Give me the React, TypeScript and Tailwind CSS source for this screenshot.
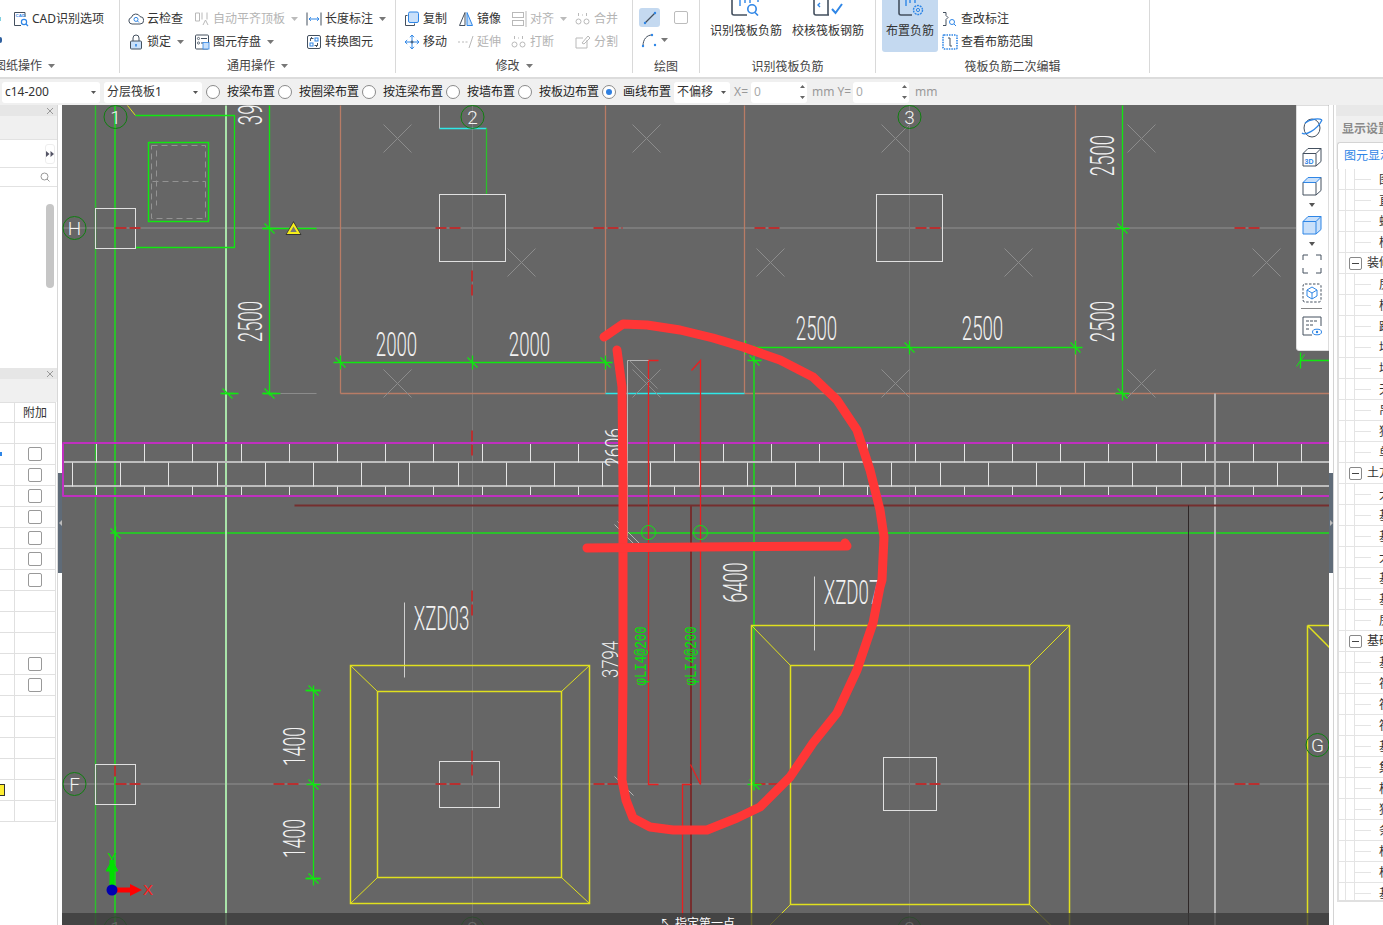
import React from "react";

const DK = "#44505f";
const BL = "#2f86e6";
const LB = "#c9e0fa";
const GY = "#b9b9b9";

function Ic({ w = 16, h = 16, children }: { w?: number; h?: number; children: React.ReactNode }) {
  return (
    <svg width={w} height={h} viewBox={`0 0 ${w} ${h}`} fill="none" className="shrink-0">
      {children}
    </svg>
  );
}

function Caret({ c = "#777" }: { c?: string }) {
  return (
    <svg width="7" height="4" viewBox="0 0 7 4" className="shrink-0">
      <path d="M0 0h7L3.5 4z" fill={c} />
    </svg>
  );
}

const icons: Record<string, React.ReactNode> = {
  cad: (
    <Ic>
      <path d="M12 6V1.5H1.5v13H8" stroke={DK} />
      <text x="2.6" y="6" fontSize="4.4" fontWeight="700" fill={BL} fontFamily="Liberation Sans">CAD</text>
      <circle cx="11" cy="11" r="2.6" stroke={BL} strokeWidth="1.2" />
      <path d="M13 13l2 2" stroke={BL} strokeWidth="1.2" />
    </Ic>
  ),
  cloud: (
    <Ic>
      <path d="M4 13a3.3 3.3 0 0 1-.6-6.5A4.6 4.6 0 0 1 12 5.6a3.7 3.7 0 0 1 0 7.4z" stroke={DK} />
      <circle cx="8" cy="8.4" r="2" stroke={BL} />
      <path d="M9.5 10l1.5 1.5" stroke={BL} />
    </Ic>
  ),
  lock: (
    <Ic>
      <path d="M5 7V4a3 3 0 0 1 6 0v3" stroke={DK} />
      <rect x="2.5" y="7" width="11" height="8" rx="1" fill={LB} stroke={DK} />
      <path d="M8 10v2.5" stroke={BL} strokeWidth="1.6" />
    </Ic>
  ),
  auto: (
    <Ic>
      <path d="M1.5 2v8h4V2zM8 1.5v7M13 1.5v7M9 14l2.5-5 2.5 5" stroke={GY} />
    </Ic>
  ),
  store: (
    <Ic>
      <rect x="1.5" y="1" width="13" height="14" rx="1" stroke={DK} />
      <circle cx="4.5" cy="4.5" r="1.1" stroke={DK} strokeWidth=".8" />
      <circle cx="4.5" cy="9" r="1.1" stroke={DK} strokeWidth=".8" />
      <path d="M7 4.5h6M7 9h2" stroke={DK} />
      <rect x="9" y="8.5" width="6" height="6.5" fill={LB} stroke={BL} strokeWidth=".8" />
    </Ic>
  ),
  dim: (
    <Ic>
      <path d="M1 1.5v13M15 1.5v13" stroke={DK} />
      <path d="M3 8h10M3 8l2-1.8M3 8l2 1.8M13 8l-2-1.8M13 8l-2 1.8" stroke={BL} />
    </Ic>
  ),
  conv: (
    <Ic>
      <rect x="1.5" y="1.5" width="13" height="13" rx="1.5" stroke={DK} />
      <path d="M4.5 7V4.5h3M4.5 4.5L6 3M11.5 9v2.5h-3M11.5 11.5L10 13" stroke={DK} />
      <rect x="9" y="4" width="3" height="3" stroke={BL} />
      <rect x="4" y="9" width="3" height="3" stroke={BL} />
    </Ic>
  ),
  copy: (
    <Ic>
      <path d="M3.5 4.5h-2v10h9v-2" stroke={DK} />
      <rect x="4.5" y="1" width="10" height="10.5" rx="1.5" fill={LB} stroke={BL} />
    </Ic>
  ),
  move: (
    <Ic>
      <path d="M8 2v12M2 8h12M8 1L6 3.2M8 1l2 2.2M8 15l-2-2.2M8 15l2-2.2M1 8l2.2-2M1 8l2.2 2M15 8l-2.2-2M15 8l-2.2 2" stroke={BL} />
      <path d="M6.5 8h3M8 6.5v3" stroke={DK} />
    </Ic>
  ),
  mirror: (
    <Ic>
      <path d="M7 1.5v13H1.5z" stroke={DK} fill="#fff" />
      <path d="M9 1.5v13h5.5z" stroke={BL} fill={LB} />
    </Ic>
  ),
  extend: (
    <Ic>
      <path d="M0 8h2M4 8h2M7.5 8h2" stroke={GY} />
      <path d="M15 2L11 14" stroke={GY} />
    </Ic>
  ),
  align: (
    <Ic>
      <rect x="1.5" y="1.5" width="11" height="5" stroke={GY} />
      <rect x="1.5" y="9.5" width="11" height="5" stroke={GY} />
      <path d="M15 0v16" stroke={GY} />
    </Ic>
  ),
  merge: (
    <Ic>
      <circle cx="3.5" cy="10.5" r="2.5" stroke={GY} />
      <circle cx="11.5" cy="10.5" r="2.5" stroke={GY} />
      <path d="M3.5 2v3M11.5 2v3M7 4h1" stroke={GY} />
    </Ic>
  ),
  split: (
    <Ic>
      <path d="M12 6v8H1V4h7" stroke={GY} />
      <path d="M7 9l6-7 2 2-6 6z" stroke={GY} />
    </Ic>
  ),
  edit: (
    <Ic>
      <path d="M1 1.5h3v3l2 2-2 2v6H1" stroke={DK} />
      <circle cx="10" cy="11" r="2.5" stroke={BL} />
      <path d="M12 13l2 2" stroke={BL} />
    </Ic>
  ),
  range: (
    <Ic>
      <rect x="1" y="1" width="14" height="14" rx="1" stroke={BL} strokeWidth="1.6" strokeDasharray="1.5 1" />
      <path d="M8 4v8M8 4H6M8 12h2" stroke={DK} />
    </Ic>
  ),
};

function Tool({ icon, label, off, caret, w, gap = 3 }: { icon: string; label: string; off?: boolean; caret?: boolean; w: number; gap?: number }) {
  return (
    <div className="flex items-center h-[23px] shrink-0" style={{ width: w }}>
      {icons[icon]}
      <span className={`whitespace-nowrap ${off ? "text-[#b4b4b4]" : "text-[#333]"}`} style={{ marginLeft: gap }}>
        {label}
      </span>
      {caret && (
        <span className="ml-[6px]">
          <Caret c={off ? "#bbb" : "#777"} />
        </span>
      )}
    </div>
  );
}

function Group({ w, label, caret, body, low, neg }: { w: number; label: string; caret?: boolean; body: React.ReactNode; low?: boolean; neg?: boolean }) {
  return (
    <div className="shrink-0 h-[73px] border-r border-[#d9d9d9] flex flex-col" style={{ width: w }}>
      <div className={`shrink-0 ${low ? "h-[58px]" : "h-[57px]"}`}>{body}</div>
      <div className={`shrink-0 h-[18px] flex items-center gap-[6px] text-[#444] ${neg ? "justify-start ml-[-6px]" : "justify-center"}`}>
        <span className="whitespace-nowrap">{label}</span>
        {caret && <Caret />}
      </div>
    </div>
  );
}

function Big({ label, icon, active, w }: { label: string; icon: React.ReactNode; active?: boolean; w: number }) {
  return (
    <div className={`flex flex-col items-center shrink-0 h-[52px] ${active ? "bg-[#c4d9f0] rounded-b-[3px]" : ""}`} style={{ width: w }}>
      <div className="h-[16px] flex">{icon}</div>
      <span className="mt-[6px] whitespace-nowrap text-[#333]">{label}</span>
    </div>
  );
}

function Ribbon() {
  return (
    <div className="h-[79px] bg-white border-b-2 border-[#dcdcdc] flex overflow-hidden">
      <Group
        w={120}
        neg
        label="图纸操作"
        caret
        body={
          <div className="pt-[7px]">
            <div className="flex items-center">
              <div className="w-[1px] h-[4px] bg-[#7fd0e0] mr-[12px]" />
              <Tool icon="cad" label="CAD识别选项" w={100} />
            </div>
            <div className="w-[2px] h-[6px] mt-[7px] rounded-r-full bg-[#2f5f9e]" />
          </div>
        }
      />
      <Group
        w={276}
        label="通用操作"
        caret
        body={
          <div className="pt-[7px] pl-[8px] flex flex-col">
            <div className="flex">
              <Tool icon="cloud" label="云检查" w={66} />
              <Tool icon="auto" label="自动平齐顶板" off caret w={112} />
              <Tool icon="dim" label="长度标注" caret w={85} />
            </div>
            <div className="flex">
              <Tool icon="lock" label="锁定" caret w={66} />
              <Tool icon="store" label="图元存盘" caret w={112} />
              <Tool icon="conv" label="转换图元" w={85} />
            </div>
          </div>
        }
      />
      <Group
        w={237}
        label="修改"
        caret
        body={
          <div className="pt-[7px] pl-[8px] flex flex-col">
            <div className="flex">
              <Tool icon="copy" label="复制" w={54} />
              <Tool icon="mirror" label="镜像" w={53} />
              <Tool icon="align" label="对齐" off caret w={64} />
              <Tool icon="merge" label="合并" off w={50} />
            </div>
            <div className="flex">
              <Tool icon="move" label="移动" w={54} />
              <Tool icon="extend" label="延伸" off w={53} />
              <Tool icon="merge" label="打断" off w={64} />
              <Tool icon="split" label="分割" off w={50} />
            </div>
          </div>
        }
      />
      <Group
        w={67}
        low
        label="绘图"
        body={
          <div className="pt-[8px] pl-[6px]">
            <div className="flex items-center">
              <div className="w-[21px] h-[19px] bg-[#c4d9f0] rounded-[3px] flex items-center justify-center">
                <Ic w={14} h={14}>
                  <path d="M2 12L12 2" stroke={DK} strokeWidth="1.2" />
                  <circle cx="2" cy="12" r="1.2" fill={BL} />
                  <circle cx="12" cy="2" r="1.2" fill={BL} />
                </Ic>
              </div>
              <div className="ml-[14px] w-[14px] h-[13px] border border-[#bcbcbc] rounded-[2px]" />
            </div>
            <div className="flex items-center mt-[5px] ml-[2px] gap-[4px]">
              <Ic>
                <path d="M2 14C2 7 6 3 11 3" stroke={DK} />
                <circle cx="2" cy="14" r="1.2" fill={BL} />
                <circle cx="11" cy="3" r="1.2" fill={BL} />
                <circle cx="14" cy="13" r="1.2" fill={BL} />
              </Ic>
              <Caret />
            </div>
          </div>
        }
      />
      <Group
        w={176}
        low
        label="识别筏板负筋"
        body={
          <div className="flex pl-[10px] gap-[10px]">
            <Big
              w={72}
              label="识别筏板负筋"
              icon={
                <svg width="30" height="16" viewBox="0 0 30 16" fill="none">
                  <path d="M1 0v13a2 2 0 0 0 2 2h13" stroke={DK} strokeWidth="1.6" />
                  <path d="M27 0v2M9 0v6M14 0v3M19 0v3" stroke={BL} strokeWidth="1.4" />
                  <circle cx="21" cy="9" r="4.2" stroke={BL} strokeWidth="1.6" />
                  <path d="M24 12.5l3 3" stroke={BL} strokeWidth="1.6" />
                </svg>
              }
            />
            <Big
              w={72}
              label="校核筏板钢筋"
              icon={
                <svg width="30" height="16" viewBox="0 0 30 16" fill="none">
                  <path d="M1 0v13a2 2 0 0 0 2 2h13M15 0v15" stroke={DK} strokeWidth="1.6" />
                  <path d="M7 3l-2 2 2 2" stroke={BL} strokeWidth="1.4" />
                  <path d="M19 9l3.5 4L29 4" stroke={BL} strokeWidth="2" />
                </svg>
              }
            />
          </div>
        }
      />
      <Group
        w={274}
        low
        label="筏板负筋二次编辑"
        body={
          <div className="flex pl-[6px]">
            <Big
              w={56}
              active
              label="布置负筋"
              icon={
                <svg width="30" height="16" viewBox="0 0 30 16" fill="none">
                  <path d="M4 0v13a2 2 0 0 0 2 2h11" stroke={DK} strokeWidth="1.6" />
                  <path d="M11 0v6M15 0v3M20 0v3" stroke={BL} strokeWidth="1.4" />
                  <circle cx="23" cy="10" r="4.5" stroke={BL} strokeWidth="1.4" strokeDasharray="2 .8" />
                  <circle cx="23" cy="10" r="1.6" stroke={BL} />
                </svg>
              }
            />
            <div className="pt-[7px] ml-[4px]">
              <Tool icon="edit" label="查改标注" w={100} />
              <Tool icon="range" label="查看布筋范围" w={100} />
            </div>
          </div>
        }
      />
      <div className="flex-1" />
    </div>
  );
}

function Select({ w, text, ml }: { w: number; text: string; ml: number }) {
  return (
    <div className="h-[21px] bg-white rounded-[3px] flex items-center justify-between px-[3px] shrink-0" style={{ width: w, marginLeft: ml }}>
      <span className="text-[#333] whitespace-nowrap">{text}</span>
      <span className="mr-[1px]">
        <svg width="5" height="3" viewBox="0 0 5 3">
          <path d="M0 0h5L2.5 3z" fill="#555" />
        </svg>
      </span>
    </div>
  );
}

function Radio({ label, on }: { label: string; on?: boolean }) {
  return (
    <div className="flex items-center mr-[3px] shrink-0">
      <span className="w-[14px] h-[14px] rounded-full border border-[#8a8a8a] bg-white flex items-center justify-center">
        {on && <span className="w-[6px] h-[6px] rounded-full bg-[#2f7fe0]" />}
      </span>
      <span className="ml-[7px] whitespace-nowrap text-[#222]">{label}</span>
    </div>
  );
}

function Spin({ ml }: { ml: number }) {
  return (
    <div className="w-[56px] h-[21px] bg-white rounded-[3px] flex items-center justify-between pl-[3px] pr-[2px] shrink-0" style={{ marginLeft: ml }}>
      <span className="text-[#aaa]">0</span>
      <svg width="5" height="14" viewBox="0 0 5 14">
        <path d="M0 3l2.5-3L5 3zM0 11h5l-2.5 3z" fill="#666" />
      </svg>
    </div>
  );
}

function OptionBar() {
  return (
    <div className="h-[26px] bg-[#f0f0f0] flex items-center">
      <Select w={98} text="c14-200" ml={2} />
      <Select w={98} text="分层筏板1" ml={4} />
      <div className="ml-[4px] flex">
        <Radio label="按梁布置" />
        <Radio label="按圈梁布置" />
        <Radio label="按连梁布置" />
        <Radio label="按墙布置" />
        <Radio label="按板边布置" />
        <Radio label="画线布置" on />
      </div>
      <Select w={56} text="不偏移" ml={0} />
      <span className="ml-[4px] text-[#999]">X=</span>
      <Spin ml={3} />
      <span className="ml-[5px] text-[#999]">mm</span>
      <span className="ml-[3px] text-[#999]">Y=</span>
      <Spin ml={2} />
      <span className="ml-[6px] text-[#999]">mm</span>
    </div>
  );
}

function PanelHead() {
  return (
    <div className="h-[11px] bg-[#e6e6e6] flex items-center justify-end pr-[3px]">
      <svg width="8" height="8" viewBox="0 0 8 8">
        <path d="M1 1l6 6M7 1L1 7" stroke="#999" />
      </svg>
    </div>
  );
}

const LEFT_ROWS = Array.from({ length: 19 }, (_, i) => i + 1);
const CHECKED = [2, 3, 4, 5, 6, 7, 8, 12, 13];

function LeftPanel() {
  return (
    <div className="w-[58px] shrink-0 h-full bg-white border-r border-[#d8d8d8] text-[#333] flex flex-col">
      <PanelHead />
      <div className="h-[24px] bg-[#f0f0f0] border-b border-[#e2e2e2]" />
      <div className="h-[28px] border-b border-[#e2e2e2] flex items-center justify-end pr-[2px]">
        <div className="w-[10px] h-[20px] border border-[#eee] rounded-[3px] flex items-center justify-center">
          <svg width="8" height="6" viewBox="0 0 8 6">
            <path d="M0 0l3.5 3L0 6zM4.5 0L8 3 4.5 6z" fill="#556" />
          </svg>
        </div>
      </div>
      <div className="h-[19px] border-b border-[#e2e2e2] flex items-center justify-end pr-[7px]">
        <svg width="10" height="10" viewBox="0 0 10 10" fill="none">
          <circle cx="4.5" cy="4.5" r="3.5" stroke="#999" />
          <path d="M7 7l2.5 2.5" stroke="#999" />
        </svg>
      </div>
      <div className="h-[176px] pt-[17px] pl-[46px]">
        <div className="w-[8px] h-[84px] rounded-[4px] bg-[#c6c6c6]" />
      </div>
      <div className="h-[5px]" />
      <PanelHead />
      <div className="h-[23px] bg-[#f0f0f0]" />
      <div className="w-[56px] border-t border-[#e0e0e0] flex flex-col">
        <div className="h-[20px] flex border-b border-r border-[#e0e0e0]">
          <div className="w-[15px] border-r border-[#e0e0e0]" />
          <div className="flex-1 flex items-center justify-center text-[#333]">附加</div>
        </div>
        {LEFT_ROWS.map((i) => (
          <div key={i} className="h-[21px] flex border-b border-r border-[#e0e0e0]">
            <div className="w-[15px] border-r border-[#e0e0e0] flex items-center">
              {i === 2 && <div className="w-[2px] h-[4px] bg-[#2f86e6]" />}
              {i === 18 && <div className="w-[5px] h-[12px] bg-[#ffee33] border-y border-r border-[#333]" />}
            </div>
            <div className="flex-1 flex items-center justify-center">
              {CHECKED.includes(i) && <div className="w-[14px] h-[14px] rounded-[2px] border border-[#999]" />}
            </div>
          </div>
        ))}
      </div>
    </div>
  );
}

function Splitter({ flip }: { flip?: boolean }) {
  return (
    <div className="w-[4px] h-full bg-white shrink-0 flex flex-col pt-[368px]">
      <div className="h-[100px] bg-[#5f6b78] flex items-center justify-center">
        <svg width="3" height="6" viewBox="0 0 3 6">
          <path d={flip ? "M0 0l3 3-3 3z" : "M3 0L0 3l3 3z"} fill="#bbb" />
        </svg>
      </div>
    </div>
  );
}

const G = "#10e810";
const GL = "#2cc02c";
const BR = "#b87c66";
const RD = "#b83030";
const YL = "#e0e01e";

function Cad({ x, y, t, rot = 0, size = 34, sx = 0.55, c = "#f2f2f2" }: { x: number; y: number; t: string; rot?: number; size?: number; sx?: number; c?: string }) {
  return (
    <text
      transform={`translate(${x} ${y}) rotate(${rot}) scale(${sx} 1)`}
      textAnchor="middle"
      fontSize={size}
      fontWeight={300}
      fontFamily="Roboto, Liberation Sans, sans-serif"
      fill={c}
    >
      {t}
    </text>
  );
}

function Axis({ x, y, t }: { x: number; y: number; t: string }) {
  return (
    <g>
      <circle cx={x} cy={y} r="11.5" fill="none" stroke="#0f7f0f" strokeWidth="1" />
      <text x={x} y={y + 6.5} textAnchor="middle" fontSize="19" fontWeight={300} fontFamily="Roboto, Liberation Sans, sans-serif" fill="#f4f4f4">
        {t}
      </text>
    </g>
  );
}

function TickH({ x, y }: { x: number; y: number }) {
  return <path d={`M${x - 7} ${y}h14M${x - 5} ${y - 5}l10 10`} stroke={G} strokeWidth="1.3" />;
}
function TickV({ x, y }: { x: number; y: number }) {
  return <path d={`M${x} ${y - 7}v14M${x - 5} ${y - 5}l10 10`} stroke={G} strokeWidth="1.3" />;
}
function Cross({ x, y }: { x: number; y: number }) {
  return <path d={`M${x - 14} ${y - 14}l28 28M${x + 14} ${y - 14}l-28 28`} stroke="#8c8c8c" />;
}

const TOP_BRICKS = Array.from({ length: 26 }, (_, i) => Math.round(96 + i * 48.2));
const MID_BRICKS = Array.from({ length: 26 }, (_, i) => Math.round(72 + i * 48.2));
const CROSSES: [number, number][] = [
  [397, 138], [646, 138], [895, 138], [1141, 138],
  [521, 262], [770, 262], [1018, 262], [1266, 262],
  [397, 383], [646, 383], [895, 383], [1141, 383],
];
const RED_H = [
  [115, 140], [435, 462], [593, 622], [754, 782], [915, 941], [1234, 1262],
];
const RED_H2 = [
  [115, 140], [273, 300], [435, 462], [593, 622], [754, 782], [915, 941], [1234, 1262],
];

function Footing({ x1, y1, x2, y2, a, b, c, d }: { x1: number; y1: number; x2: number; y2: number; a: number; b: number; c: number; d: number }) {
  return (
    <g stroke={YL} strokeWidth="1.5" fill="none">
      <rect x={x1} y={y1} width={x2 - x1} height={y2 - y1} />
      <rect x={a} y={b} width={c - a} height={d - b} />
      <path d={`M${x1} ${y1}L${a} ${b}M${x2} ${y1}L${c} ${b}M${x1} ${y2}L${a} ${d}M${x2} ${y2}L${c} ${d}`} strokeWidth="1" />
    </g>
  );
}

function Drawing() {
  return (
    <svg width="1267" height="820" viewBox="62 105 1267 820" className="block">
      <rect x="62" y="105" width="1267" height="820" fill="#666" />
      <g transform="translate(.5 .5)">
        {/* axes */}
        <g stroke="#7b7b7b" strokeWidth="2">
          <path d="M62 227.5H1329M62 783.5H1329" />
          <path d="M472 105V925M909 105V925" strokeWidth="1" />
        </g>
        {/* beam outlines */}
        <g stroke={BR} strokeWidth="1.3">
          <path d="M340 105V393M605 105V393M744 105V393M1075 105V393" />
          <path d="M340 393H605M744 393H1329" />
        </g>
        <path d="M605 393H744M439 128H486" stroke="#2fe8e8" strokeWidth="1.3" />
        <path d="M439 105V128" stroke="#bdbdbd" />
        <path d="M486 128V194" stroke={GL} strokeWidth="1.3" />
        {CROSSES.map(([x, y]) => (
          <Cross key={`${x}-${y}`} x={x} y={y} />
        ))}
        {/* grid greens */}
        <g stroke={GL}>
          <path d="M95 105V925" strokeWidth="1.4" />
          <path d="M114.5 105V925" strokeWidth="2" />
          <path d="M110 532.5H1329" strokeWidth="2" />
          <path d="M753.5 345V790" strokeWidth="2" />
        </g>
        <path d="M225.5 105V925" stroke="#a9e4a9" strokeWidth="2" />
        <path d="M1214.5 393V925" stroke="#b5b5b5" strokeWidth="2" />
        <path d="M127 105l8 10" stroke={YL} />
        {/* top-left green box */}
        <path d="M135 115H234V247H135" stroke={G} strokeWidth="1.3" fill="none" />
        <rect x="148" y="142" width="60" height="79" stroke={G} fill="none" strokeWidth="1.5" />
        <path d="M151 145H205V218H151Z M152 181H205M156 150V205" stroke="#939393" strokeDasharray="6 4" fill="none" />
        {/* columns */}
        <g stroke="#e0e0e0" fill="none">
          <rect x="95" y="208" width="40" height="40" />
          <rect x="95" y="764" width="40" height="40" />
          <rect x="439" y="194" width="66" height="67" />
          <rect x="876" y="194" width="66" height="67" />
          <rect x="439" y="761" width="60" height="46" />
          <rect x="883" y="757" width="53" height="53" />
        </g>
        {/* red centre dashes */}
        <g stroke={RD} strokeWidth="2" strokeDasharray="11 3">
          {RED_H.map(([a, b]) => (
            <path key={a} d={`M${a} 227.5H${b}`} />
          ))}
          {RED_H2.map(([a, b]) => (
            <path key={a} d={`M${a} 783.5H${b}`} />
          ))}
          <path d="M114.5 765V778M471.5 270V295M471.5 430V458M471.5 590V617M471.5 750V775" />
        </g>
        {/* wall */}
        <path d="M62 461.5H1329M62 485.5H1329" stroke="#bdbdbd" strokeWidth="2" />
        <g stroke="#e4e4e4">
          {TOP_BRICKS.map((x) => (
            <path key={x} d={`M${x} 443V462M${x} 486V496`} />
          ))}
          {MID_BRICKS.map((x) => (
            <path key={x} d={`M${x} 462V486`} />
          ))}
        </g>
        <path d="M62 442.5H1329M62 495.5H1329M62.5 443V496" stroke="#c030c0" strokeWidth="2" fill="none" />
        {/* dark lines */}
        <path d="M294 505H1329" stroke="#752e2e" strokeWidth="2" />
        <path d="M690.5 505V925" stroke="#752e2e" strokeWidth="2" />
        <path d="M1188 505V925" stroke="#2d2626" />
        {/* dimensions */}
        <g stroke={G} strokeWidth="1.3">
          <path d="M269 105V395M333 362H612M744 347H1082M1122 105V400M313 685V885M1300 360H1329M1300 352V368" />
          <path d="M262 228H316M262 393H280M222 393H238" />
          <path d="M305 690H320M305 878H320" />
        </g>
        <path d="M280 393H316" stroke="#8c8c8c" />
        <TickH x={269} y={228} />
        <TickH x={269} y={393} />
        <TickH x={227} y={393} />
        <TickV x={340} y={362} />
        <TickV x={472} y={362} />
        <TickV x={605} y={362} />
        <TickV x={745} y={347} />
        <TickV x={909} y={347} />
        <TickV x={1075} y={347} />
        <TickH x={1122} y={228} />
        <TickH x={1122} y={393} />
        <TickH x={754} y={360} />
        <TickH x={754} y={784} />
        <TickH x={313} y={690} />
        <TickH x={313} y={784} />
        <TickH x={313} y={878} />
        <TickV x={115} y={533} />
        <path d="M1296 366l8-12" stroke={G} />
        {/* dimension texts */}
        <Cad x={396} y={355} t="2000" />
        <Cad x={529} y={355} t="2000" />
        <Cad x={816} y={339} t="2500" />
        <Cad x={982} y={339} t="2500" />
        <Cad x={261} y={321} t="2500" rot={-90} />
        <Cad x={261} y={104} t="3900" rot={-90} />
        <Cad x={1113} y={155} t="2500" rot={-90} />
        <Cad x={1113} y={321} t="2500" rot={-90} />
        <Cad x={304} y={746} t="1400" rot={-90} size={32} />
        <Cad x={304} y={838} t="1400" rot={-90} size={32} />
        <Cad x={621} y={447} t="2606" rot={-90} size={23} sx={0.76} />
        <Cad x={617} y={659} t="3794" rot={-90} size={22} sx={0.76} />
        <Cad x={746} y={582} t="6400" rot={-90} size={33} />
        <Cad x={441} y={629} t="XZD03" />
        <Cad x={851} y={603} t="XZD07" />
        <path d="M404 602V677M814 576V650" stroke="#cfcfcf" />
        {/* footings */}
        <Footing x1={350} y1={665} x2={589} y2={903} a={377} b={691} c={561} d={877} />
        <Footing x1={751} y1={625} x2={1069} y2={943} a={790} b={665} c={1029} d={904} />
        <path d="M1307 625H1329M1307 625V925M1307 625L1329 647" stroke={YL} strokeWidth="1.5" fill="none" />
        {/* rebar */}
        <g stroke="#e82020" strokeWidth="1.3" fill="none">
          <path d="M658 360H648V784H658M691 370L700 360V784L690 764M691 784H682V925" />
        </g>
        <path d="M648 360H627V536" stroke="#b5b5b5" fill="none" />
        <path d="M614 524l24 24M617 521l24 24M614 776l19 19" stroke="#b5b5b5" />
        <path d="M629 360l28 28M657 372l-24 24" stroke="#8c8c8c" />
        <circle cx="648" cy="532" r="7" fill="none" stroke={G} />
        <circle cx="700" cy="532" r="7" fill="none" stroke={G} />
        <text transform="translate(645 685) rotate(-90) scale(.77 1)" fontSize="16" fontFamily="Liberation Mono, monospace" fill="#00e800">φLI4@200</text>
        <text transform="translate(695 685) rotate(-90) scale(.77 1)" fontSize="16" fontFamily="Liberation Mono, monospace" fill="#00e800">φLI4@200</text>
        {/* axis bubbles */}
        <Axis x={115} y={116.5} t="1" />
        <Axis x={472} y={116.5} t="2" />
        <Axis x={909} y={116.5} t="3" />
        <Axis x={74} y={227.5} t="H" />
        <Axis x={74} y={783.5} t="F" />
        <Axis x={1317} y={744.5} t="G" />
        <Axis x={115} y={928} t="1" />
        <Axis x={472} y={928} t="2" />
        <Axis x={909} y={928} t="3" />
      </g>
      {/* warning triangle */}
      <path d="M293.5 221l8 14h-16z" fill="#333" />
      <path d="M293.5 224.5l5 8.5h-10z" fill="#777" stroke="#f6ee1a" strokeWidth="2" />
      {/* UCS */}
      <path d="M112 885V860" stroke="#00e000" strokeWidth="5" />
      <path d="M112 861l-6 10h12z" fill="#00e000" stroke="#00e000" />
      <text x="112" y="863" textAnchor="middle" fontSize="14" fill="#00e000" fontFamily="Liberation Sans, sans-serif">Y</text>
      <path d="M116 890H132" stroke="#ff0000" strokeWidth="5" />
      <path d="M142 890l-12-6v12z" fill="#ff0000" />
      <text x="143" y="895" fontSize="15" fill="#ff2020" fontFamily="Liberation Sans, sans-serif">X</text>
      <circle cx="112" cy="890" r="5.5" fill="#0000b0" />
      {/* hand-drawn annotation */}
      <g stroke="#ff3636" strokeWidth="9" strokeLinecap="round" strokeLinejoin="round" fill="none">
        <path d="M604 337L623 324L647 325L680 330L713 338L743 347L780 360L813 377L837 400L857 430L870 470L880 510L884 537L882 580L880 587L873 623L857 670L837 713L813 743L790 777L760 807L737 818L707 830L673 830L650 827L633 818L626 800L622 780L623 680L623 580L623 487L622 387L617 350" />
        <path d="M587 548L700 547L847 546L845 543" />
      </g>
    </svg>
  );
}

function VBtn({ children }: { children: React.ReactNode }) {
  return <div className="h-[29px] flex items-center justify-center">{children}</div>;
}

function Tri() {
  return (
    <div className="h-[10px] flex items-center justify-center">
      <svg width="6" height="4" viewBox="0 0 6 4">
        <path d="M0 0h6L3 4z" fill="#555" />
      </svg>
    </div>
  );
}

function ViewBar() {
  return (
    <div className="absolute top-0 right-0 w-[33px] h-[246px] bg-white rounded-bl-[3px] border border-[#ddd] pt-[7px] pr-[2px]">
      <VBtn>
        <svg width="22" height="20" viewBox="0 0 22 20" fill="none">
          <ellipse cx="11" cy="10" rx="8" ry="9" stroke={DK} />
          <path d="M1 15C4 18 16 12 21 2" stroke={BL} strokeWidth="1.3" />
          <path d="M4 5C9 1 18 0 21 2" stroke={BL} strokeWidth="1.3" />
        </svg>
      </VBtn>
      <VBtn>
        <svg width="20" height="20" viewBox="0 0 20 20" fill="none">
          <path d="M1 6.5L6 1.5H19V14.5L14 19H1ZM1 6.5H14V19M14 6.5L19 1.5" stroke={DK} />
          <text x="2.5" y="16.5" fontSize="7" fontWeight="700" fill={BL} fontFamily="Liberation Sans, sans-serif">3D</text>
        </svg>
      </VBtn>
      <VBtn>
        <svg width="20" height="20" viewBox="0 0 20 20" fill="none">
          <path d="M1 6.5L6 1.5H19L14 6.5Z" fill={LB} stroke={BL} />
          <path d="M1 6.5V19H14V6.5M14 19L19 14.5V1.5" stroke={DK} />
        </svg>
      </VBtn>
      <Tri />
      <VBtn>
        <svg width="20" height="20" viewBox="0 0 20 20" fill="none">
          <path d="M1 6.5L6 1.5H19V14.5L14 19H1Z" fill={LB} stroke={BL} />
          <path d="M1 6.5H14V19M14 6.5L19 1.5" stroke={BL} />
        </svg>
      </VBtn>
      <Tri />
      <VBtn>
        <svg width="20" height="20" viewBox="0 0 20 20" fill="none">
          <path d="M1 6V1h5M14 1h5v5M19 14v5h-5M6 19H1v-5" stroke={DK} />
        </svg>
      </VBtn>
      <VBtn>
        <svg width="20" height="20" viewBox="0 0 20 20" fill="none">
          <rect x="1" y="1" width="18" height="18" rx="2" stroke={DK} strokeDasharray="2.5 1.5" />
          <path d="M10 4l5 3v6l-5 3-5-3V7zM5 7l5 3 5-3M10 10v6" stroke={BL} />
        </svg>
      </VBtn>
      <div className="mx-[4px] mt-[1px] mb-[2px] border-t border-[#888]" />
      <VBtn>
        <svg width="20" height="20" viewBox="0 0 20 20" fill="none">
          <path d="M19 10V1H1v18h9" stroke={DK} />
          <path d="M4 5h12M4 9h8M4 13h4" stroke={DK} strokeDasharray="3 1" />
          <ellipse cx="15" cy="16" rx="4.5" ry="2.8" stroke={BL} />
          <circle cx="15" cy="16" r="1.2" fill={BL} />
        </svg>
      </VBtn>
    </div>
  );
}

function Canvas() {
  return (
    <div className="relative w-[1267px] h-full shrink-0 overflow-hidden">
      <Drawing />
      <ViewBar />
      <div className="absolute left-0 right-0 bottom-0 h-[12px] bg-[#3a3a3a]/75 flex justify-center overflow-hidden">
        <span className="text-white text-[12px] leading-[22px] whitespace-nowrap ml-[4px]">↖ 指定第一点</span>
      </div>
    </div>
  );
}

type TreeRow = { t: string; head?: boolean; line?: boolean };
const TREE: TreeRow[] = [
  { t: "图元" },
  { t: "直形梯段", line: true },
  { t: "螺旋梯段", line: true },
  { t: "楼梯井", line: true },
  { t: "装修", head: true },
  ...["房间", "楼地面", "踢脚", "墙裙", "墙面", "天棚", "吊顶", "独立柱装修", "单梁装修"].map((t) => ({ t, line: true })),
  { t: "土方", head: true },
  ...["大开挖土方", "基槽土方", "基坑土方", "大开挖灰土回填", "基槽灰土回填", "基坑灰土回填", "房心回填"].map((t) => ({ t, line: true })),
  { t: "基础", head: true },
  ...["基础梁", "筏板基础", "筏板主筋", "筏板负筋", "基础板带", "集水坑", "柱墩", "独立基础", "条形基础", "桩承台", "桩", "基础垫层"].map((t) => ({ t, line: true })),
];

function Tree() {
  return (
    <div className="h-[733px] ml-[1px] border-l-2 border-b-2 border-[#e0e0e0] overflow-hidden">
      {TREE.map((r, i) => (
        <div key={i} className="h-[21px] flex border-b border-[#e4e4e4] text-[#333] whitespace-nowrap">
          <div className="w-[7px] shrink-0 border-r border-[#e4e4e4]" />
          {r.head ? (
            <div className="flex items-center ml-[3px]">
              <div className="w-[13px] h-[13px] border border-[#888] rounded-[2px] flex items-center justify-center shrink-0">
                <div className="w-[7px] h-px bg-[#444]" />
              </div>
              <span className="ml-[5px]">{r.t}</span>
            </div>
          ) : (
            <>
              <div className="w-[9px] shrink-0 border-r border-[#e4e4e4]" />
              <div className="w-[16px] shrink-0 flex items-center">
                <div className="w-full h-px bg-[#e4e4e4]" />
              </div>
              <span className="ml-[8px] leading-[21px]">{r.t}</span>
            </>
          )}
        </div>
      ))}
    </div>
  );
}

function RightPanel() {
  return (
    <div className="flex-1 h-full bg-white border-l border-[#d4d4d4] pl-[2px] overflow-hidden">
      <div className="h-[11px] bg-[#e8e8e8]" />
      <div className="h-[26px] bg-[#f0f0f0] flex items-center pl-[6px] font-semibold text-[#8a8a8a] whitespace-nowrap">显示设置</div>
      <div className="h-[27px] pl-px bg-[#f0f0f0] overflow-hidden">
        <div className="h-[27px] bg-white border-t border-l border-[#d4d4d4] rounded-tl-[3px] pl-[6px] flex items-center text-[#2f86e6] whitespace-nowrap">图元显示</div>
      </div>
      <Tree />
    </div>
  );
}

export default function App() {
  return (
    <div className="w-[1383px] h-[925px] overflow-hidden bg-white text-[12px] leading-[18px] font-['Noto_Sans','Noto_Sans_CJK_SC',sans-serif]">
      <Ribbon />
      <OptionBar />
      <div className="flex h-[820px]">
        <LeftPanel />
        <Splitter />
        <Canvas />
        <Splitter flip />
        <RightPanel />
      </div>
    </div>
  );
}
